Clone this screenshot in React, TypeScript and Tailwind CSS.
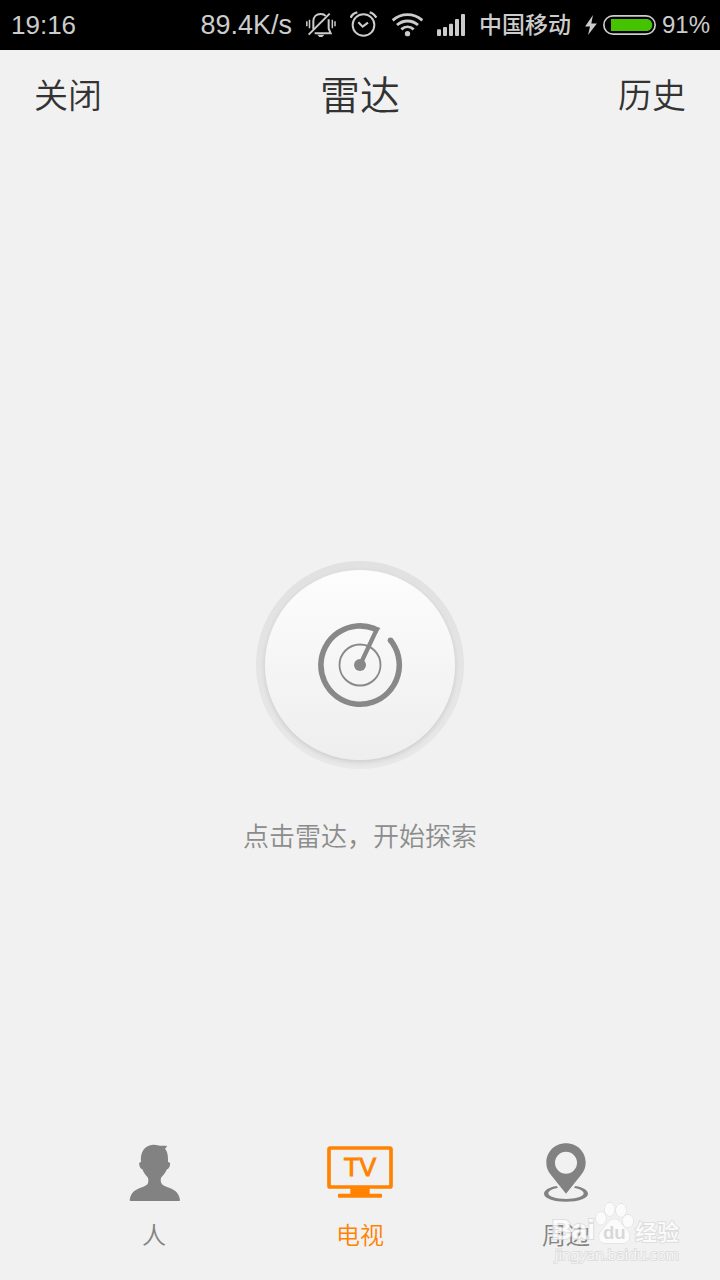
import React from "react";

const MutedBellIcon = () => (
  <svg width="30" height="28" viewBox="38 33 90 84" fill="none" stroke="currentColor" strokeWidth="6">
    <path d="M40.500 64v15M48.500 59v26M117 59v26M125 64v15" strokeWidth="4.500" />
    <path d="M60 88V64c0-14 9-22 22-22 7 0 12 2 15 6M106 58v28l6 14H64" />
    <path d="M46 104 109 41" />
    <path d="M72 104h21l-6 7h-9z" fill="currentColor" stroke="none" />
  </svg>
);

const AlarmIcon = () => (
  <svg width="28" height="28" viewBox="168 33 84 84" fill="none" stroke="currentColor" strokeWidth="6">
    <circle cx="208.500" cy="75" r="32.500" />
    <path d="M193 67 206 80 222 68" strokeWidth="6.500" />
    <path d="M170 53c3-7 10-14 20-16M227 37c10 2 16 9 20 16" strokeWidth="7" />
  </svg>
);

const WifiIcon = () => (
  <svg width="31" height="28" viewBox="294 33 93 84" fill="none" stroke="currentColor" strokeWidth="8.500">
    <path d="M296 61c26-23 63-23 89 0" />
    <path d="M309 75c19-16 44-16 63 0" />
    <path d="M322 88c11-10 26-10 37 0" />
    <circle cx="340.500" cy="101" r="8" fill="currentColor" stroke="none" />
  </svg>
);

const SignalIcon = () => (
  <svg width="28" height="28" viewBox="429 33 84 84" fill="currentColor">
    <rect x="429" y="88" width="12" height="20" rx="3" />
    <rect x="447" y="81" width="12" height="27" rx="3" />
    <rect x="465" y="71" width="12" height="37" rx="3" />
    <rect x="483" y="57" width="12" height="51" rx="3" />
    <rect x="501" y="42" width="12" height="66" rx="3" />
  </svg>
);

const BoltIcon = () => (
  <svg width="12" height="20" viewBox="0 0 36 61" fill="currentColor">
    <path d="M24 0 0 35h15L9 61 36 26H19z" />
  </svg>
);

const BatteryIcon = () => (
  <svg width="53" height="20" viewBox="0 0 159 60" fill="none">
    <rect x="2.500" y="2.500" width="154" height="55" rx="27.500" stroke="currentColor" strokeWidth="5" />
    <path d="M24 12h106c11 0 18 8 18 18s-7 18-18 18H24z" fill="#46c300" />
  </svg>
);

const RadarIcon = () => (
  <svg width="86" height="86" viewBox="-43 -43 86 86" fill="none" stroke="#888888">
    <circle r="20.500" strokeWidth="1.800" />
    <path d="M30.500-24.700A39.200 39.200 0 1 1 14.500-36.400" strokeWidth="5.600" />
    <circle cx="30.500" cy="-24.700" r="2.800" fill="#888888" stroke="none" />
    <path d="M0 0 16-34" strokeWidth="4.200" />
    <path d="M13.500-39.600 20.300-37 17.500-32.200 13-33.500z" fill="#888888" stroke="none" />
    <circle r="6" fill="#888888" stroke="none" />
  </svg>
);

const PersonIcon = () => (
  <svg width="51" height="57" viewBox="57 42 153 171" fill="currentColor">
    <path d="M93 96C90 66 104 45 130 44c10 0 18 5 41 3-1 4-3 7-6 9 6 7 10 18 9 40 8 1 7 6 5 13-2 6-5 8-8 9-6 13-12 19-18 25-3 14 2 22 16 27 23 7 38 16 41 40 0 2-1 3-3 3H62c-2 0-3-1-3-3 3-24 18-33 41-40 14-5 17-13 14-27-6-6-12-13-17-25-4-1-6-4-8-9-2-7-3-12 4-13z" />
  </svg>
);

const TvIcon = () => (
  <svg width="66" height="52" viewBox="51 51 198 156" fill="currentColor">
    <rect x="57" y="57" width="186" height="117" rx="4" fill="none" stroke="currentColor" strokeWidth="11" />
    <path d="M121 178h58v16h35c3 0 3 12 0 12H86c-3 0-3-12 0-12h35z" />
    <text
      x="150"
      y="142"
      textAnchor="middle"
      fontSize="76"
      stroke="currentColor"
      strokeWidth="3"
      className="font-['Liberation_Sans',sans-serif] [font-kerning:none]"
    >
      TV
    </text>
  </svg>
);

const PinIcon = () => (
  <svg width="44" height="59" viewBox="72 40 132 177" fill="currentColor">
    <path
      fillRule="evenodd"
      d="M138 41c33 0 59 25 59 58 0 15-5 25-14 37l-45 56-45-56c-9-12-14-22-14-37 0-33 26-58 59-58zm0 25a33 33 0 1 0 0 66 33 33 0 0 0 0-66z"
    />
    <path
      fillRule="evenodd"
      d="M110 169c-24 4-38 13-38 23 0 14 29 24 66 24s66-10 66-24c0-10-14-19-38-23l-4 5c16 3 29 9 29 17 0 10-23 17-53 17s-53-7-53-17c0-8 13-14 29-17z"
    />
  </svg>
);

const PawIcon = () => (
  <svg width="40" height="42" viewBox="225 216 120 126" fill="#ffffff" stroke="#d4d4d4" strokeWidth="3">
    <ellipse cx="243" cy="265" rx="15" ry="19" />
    <ellipse cx="269" cy="238" rx="15" ry="20" />
    <ellipse cx="303" cy="241" rx="15" ry="20" />
    <ellipse cx="324" cy="273" rx="16" ry="19" />
    <path d="M283 268c17 0 22 17 33 27 21 18 15 45-9 45H258c-24 0-28-26-9-43 13-11 17-29 34-29z" />
    <text
      x="283"
      y="328"
      textAnchor="middle"
      fontSize="56"
      fontWeight="700"
      fill="#d0d0d0"
      stroke="none"
      className="font-['Liberation_Sans',sans-serif]"
    >
      du
    </text>
  </svg>
);

const tabs = [
  { label: "人", Icon: PersonIcon, active: false },
  { label: "电视", Icon: TvIcon, active: true },
  { label: "周边", Icon: PinIcon, active: false },
];

const StatusBar: React.FC = () => (
  <div className="flex h-[50px] items-center justify-between bg-black pr-[10px] pl-[11px] font-['Liberation_Sans','Noto_Sans_CJK_SC',sans-serif] text-[27px] text-[#cccccc]">
    <span className="text-[26px]">19:16</span>
    <div className="flex items-center gap-[14px]">
      <span>89.4K/s</span>
      <MutedBellIcon />
      <AlarmIcon />
      <WifiIcon />
      <SignalIcon />
      <span className="text-[23px] font-medium">中国移动</span>
      <div className="flex items-center gap-[6px]">
        <BoltIcon />
        <BatteryIcon />
        <span className="text-[24px]">91%</span>
      </div>
    </div>
  </div>
);

const Watermark: React.FC = () => (
  <div className="pointer-events-none absolute right-[41px] bottom-[16px] flex flex-col items-end text-white opacity-75 [-webkit-text-stroke:2px_#d8d8d8] [paint-order:stroke_fill]">
    <div className="flex items-end">
      <span className="font-['Liberation_Sans',sans-serif] text-[28px] leading-[28px] font-bold">Bai</span>
      <PawIcon />
      <span className="text-[22px] leading-[28px] font-medium">经验</span>
    </div>
    <span className="font-['Noto_Sans',sans-serif] text-[15px] leading-[20px]">jingyan.baidu.com</span>
  </div>
);

const App: React.FC = () => {
  return (
    <div className="relative flex min-h-screen flex-col bg-[#f1f1f1] font-['Noto_Sans_CJK_SC',sans-serif] font-[350] text-[#333333]">
      <StatusBar />

      <header className="grid h-[86px] grid-cols-3 items-center px-[34px]">
        <button type="button" className="justify-self-start text-[34px]">
          关闭
        </button>
        <h1 className="text-center text-[40px] font-[350]">雷达</h1>
        <button type="button" className="justify-self-end text-[34px]">
          历史
        </button>
      </header>

      <main className="flex flex-1 flex-col items-center justify-center gap-12 pt-[136px]">
        <button
          type="button"
          aria-label="雷达"
          className="rounded-full bg-linear-to-b from-[#e1e1e1] to-[#e8e8e8] p-[9px]"
        >
          <span className="flex size-[190px] items-center justify-center rounded-full bg-linear-to-b from-[#fdfdfd] to-[#eeeeee] shadow-[0_2px_5px_rgba(0,0,0,0.12)]">
            <RadarIcon />
          </span>
        </button>
        <p className="text-[26px] leading-[36px] text-[#8c8c8c]">点击雷达，开始探索</p>
      </main>

      <nav className="grid grid-cols-3 px-[51px] pb-[31px]">
        {tabs.map(({ label, Icon, active }) => (
          <button
            key={label}
            type="button"
            className={`flex flex-col items-center gap-[17px] ${active ? "text-[#ff8200]" : "text-[#828282]"}`}
          >
            <span className="flex h-[60px] items-center">
              <Icon />
            </span>
            <span className="text-[24px] leading-[30px]">{label}</span>
          </button>
        ))}
      </nav>

      <Watermark />
    </div>
  );
};

export default App;
